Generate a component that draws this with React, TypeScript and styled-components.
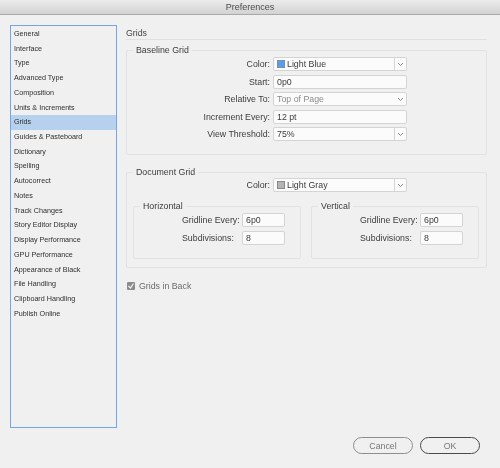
import React from "react";
import styled, { createGlobalStyle } from "styled-components";

const GlobalStyle = createGlobalStyle`
  html, body {
    margin: 0;
    padding: 0;
    background: #f0f0f0;
  }
  * {
    box-sizing: border-box;
  }
`;

const Window = styled.div`
  width: 500px;
  height: 468px;
  display: flex;
  flex-direction: column;
  background: #f0f0f0;
  font-family: "Liberation Sans", sans-serif;
  font-size: 8.8px;
  color: #3c3c3c;
  overflow: hidden;
  filter: blur(0.3px);
`;

const TitleBar = styled.div`
  height: 15px;
  flex: none;
  display: flex;
  align-items: center;
  justify-content: center;
  background: linear-gradient(#ececec, #d2d2d2);
  border-bottom: 1px solid #a9a9a9;
  font-size: 9px;
  color: #4c4c4c;
`;

const Body = styled.div`
  flex: 1;
  display: flex;
  padding: 10px 13px 0 10px;
  gap: 9px;
`;

const Sidebar = styled.ul`
  width: 107px;
  height: 403px;
  flex: none;
  margin: 0;
  padding: 1px 0 0;
  list-style: none;
  border: 1px solid #76a5e6;
`;

const SidebarItem = styled.li<{ $active?: boolean }>`
  height: 14.72px;
  line-height: 14.72px;
  padding-left: 3px;
  font-size: 7.2px;
  color: #2e2e2e;
  white-space: nowrap;
  background: ${(p) => (p.$active ? "#b6d1ee" : "transparent")};
`;

const Main = styled.div`
  flex: 1;
  min-width: 0;
  display: flex;
  flex-direction: column;
`;

const Heading = styled.div`
  height: 15px;
  line-height: 17px;
  font-size: 8.8px;
  border-bottom: 1px solid #e0e0e0;
  color: #444;
`;

const Group = styled.fieldset<{ $top: number; $height: number }>`
  margin: ${(p) => p.$top}px 0 0;
  padding: 0;
  height: ${(p) => p.$height}px;
  border: 1px solid #e2e2e2;
  border-radius: 2px;
  min-width: 0;
`;

const GroupTitle = styled.legend<{ $inset: number }>`
  margin-left: ${(p) => p.$inset}px;
  padding: 0 3px;
  line-height: 10px;
  font-size: 8.8px;
  color: #3c3c3c;
`;

const Rows = styled.div<{ $top: number }>`
  display: flex;
  flex-direction: column;
  gap: 3.5px;
  margin-top: ${(p) => p.$top}px;
`;

const Row = styled.div<{ $labelWidth: number }>`
  display: flex;
  align-items: center;
  height: 14px;
  padding-left: ${(p) => p.$labelWidth}px;
`;

const RowLabel = styled.label`
  width: 3px;
  display: flex;
  justify-content: flex-end;
  white-space: nowrap;
  padding-right: 3px;
`;

const AxisLabel = styled.label`
  width: 60px;
  white-space: nowrap;
`;

const FieldBox = styled.div<{ $width: number; $muted?: boolean }>`
  width: ${(p) => p.$width}px;
  height: 14px;
  display: flex;
  align-items: center;
  background: #fbfbfb;
  border: 1px solid #d4d4d4;
  border-radius: 2px;
  padding-left: 3px;
  color: ${(p) => (p.$muted ? "#8c8c8c" : "#3c3c3c")};
  white-space: nowrap;
`;

const FieldText = styled.span`
  flex: 1;
`;

const Swatch = styled.span<{ $color: string; $edge: string }>`
  width: 8px;
  height: 8px;
  flex: none;
  margin-right: 2px;
  background: ${(p) => p.$color};
  border: 1px solid ${(p) => p.$edge};
`;

const ArrowCell = styled.span<{ $divided?: boolean }>`
  width: 12px;
  height: 100%;
  flex: none;
  display: flex;
  align-items: center;
  justify-content: center;
  border-left: ${(p) => (p.$divided ? "1px solid #d4d4d4" : "none")};
`;

const Columns = styled.div`
  display: flex;
  gap: 10px;
  margin: 9px 7px 0 6px;
`;

const SubGroup = styled(Group)`
  flex: 1;
`;

const CheckRow = styled.div`
  display: flex;
  align-items: center;
  gap: 4px;
  margin-top: 13px;
  height: 10px;
  padding-left: 1px;
  color: #6c6c6c;
`;

const CheckMark = styled.span`
  width: 8px;
  height: 8px;
  display: flex;
  border-radius: 1px;
  background: #8b8b8b;
`;

const Footer = styled.div`
  flex: none;
  height: 31px;
  display: flex;
  justify-content: flex-end;
  gap: 7px;
  padding-right: 20px;
`;

const PillButton = styled.button<{ $primary?: boolean }>`
  width: 60px;
  height: 17px;
  padding: 0;
  background: transparent;
  border-radius: 9px;
  border: ${(p) => (p.$primary ? "1.3px solid #4a4a4a" : "1px solid #8e8e8e")};
  font-family: inherit;
  font-size: 8.8px;
  color: #777;
`;

const Chevron = () => (
  <svg width="7" height="5" viewBox="0 0 7 5" fill="none">
    <path d="M1 1l2.5 2.5L6 1" stroke="#8a8a8a" strokeWidth="1" />
  </svg>
);

const sections = [
  "General",
  "Interface",
  "Type",
  "Advanced Type",
  "Composition",
  "Units & Increments",
  "Grids",
  "Guides & Pasteboard",
  "Dictionary",
  "Spelling",
  "Autocorrect",
  "Notes",
  "Track Changes",
  "Story Editor Display",
  "Display Performance",
  "GPU Performance",
  "Appearance of Black",
  "File Handling",
  "Clipboard Handling",
  "Publish Online",
];

const GridAxis = ({ title }: { title: string }) => (
  <SubGroup $top={0} $height={58}>
    <GroupTitle $inset={6}>{title}</GroupTitle>
    <Rows $top={2}>
      <Row $labelWidth={48}>
        <AxisLabel>Gridline Every:</AxisLabel>
        <FieldBox $width={43}>6p0</FieldBox>
      </Row>
      <Row $labelWidth={48}>
        <AxisLabel>Subdivisions:</AxisLabel>
        <FieldBox $width={43}>8</FieldBox>
      </Row>
    </Rows>
  </SubGroup>
);

export default function App() {
  return (
    <Window>
      <GlobalStyle />
      <TitleBar>Preferences</TitleBar>
      <Body>
        <Sidebar>
          {sections.map((name) => (
            <SidebarItem key={name} $active={name === "Grids"}>
              {name}
            </SidebarItem>
          ))}
        </Sidebar>
        <Main>
          <Heading>Grids</Heading>
          <Group $top={5} $height={110}>
            <GroupTitle $inset={6}>Baseline Grid</GroupTitle>
            <Rows $top={2}>
              <Row $labelWidth={143}>
                <RowLabel>Color:</RowLabel>
                <FieldBox $width={134}>
                  <Swatch $color="#5b9bf0" $edge="#7d8ea5" />
                  <FieldText>Light Blue</FieldText>
                  <ArrowCell $divided>
                    <Chevron />
                  </ArrowCell>
                </FieldBox>
              </Row>
              <Row $labelWidth={143}>
                <RowLabel>Start:</RowLabel>
                <FieldBox $width={134}>0p0</FieldBox>
              </Row>
              <Row $labelWidth={143}>
                <RowLabel>Relative To:</RowLabel>
                <FieldBox $width={134} $muted>
                  <FieldText>Top of Page</FieldText>
                  <ArrowCell>
                    <Chevron />
                  </ArrowCell>
                </FieldBox>
              </Row>
              <Row $labelWidth={143}>
                <RowLabel>Increment Every:</RowLabel>
                <FieldBox $width={134}>12 pt</FieldBox>
              </Row>
              <Row $labelWidth={143}>
                <RowLabel>View Threshold:</RowLabel>
                <FieldBox $width={134}>
                  <FieldText>75%</FieldText>
                  <ArrowCell $divided>
                    <Chevron />
                  </ArrowCell>
                </FieldBox>
              </Row>
            </Rows>
          </Group>
          <Group $top={12} $height={101}>
            <GroupTitle $inset={6}>Document Grid</GroupTitle>
            <Rows $top={1}>
              <Row $labelWidth={143}>
                <RowLabel>Color:</RowLabel>
                <FieldBox $width={134}>
                  <Swatch $color="#b4b4b4" $edge="#8a8a8a" />
                  <FieldText>Light Gray</FieldText>
                  <ArrowCell $divided>
                    <Chevron />
                  </ArrowCell>
                </FieldBox>
              </Row>
            </Rows>
            <Columns>
              <GridAxis title="Horizontal" />
              <GridAxis title="Vertical" />
            </Columns>
          </Group>
          <CheckRow>
            <CheckMark>
              <svg width="8" height="8" viewBox="0 0 8 8" fill="none">
                <path d="M1.5 4l2 2 3-4.5" stroke="#f4f4f4" strokeWidth="1.2" />
              </svg>
            </CheckMark>
            Grids in Back
          </CheckRow>
        </Main>
      </Body>
      <Footer>
        <PillButton>Cancel</PillButton>
        <PillButton $primary>OK</PillButton>
      </Footer>
    </Window>
  );
}
